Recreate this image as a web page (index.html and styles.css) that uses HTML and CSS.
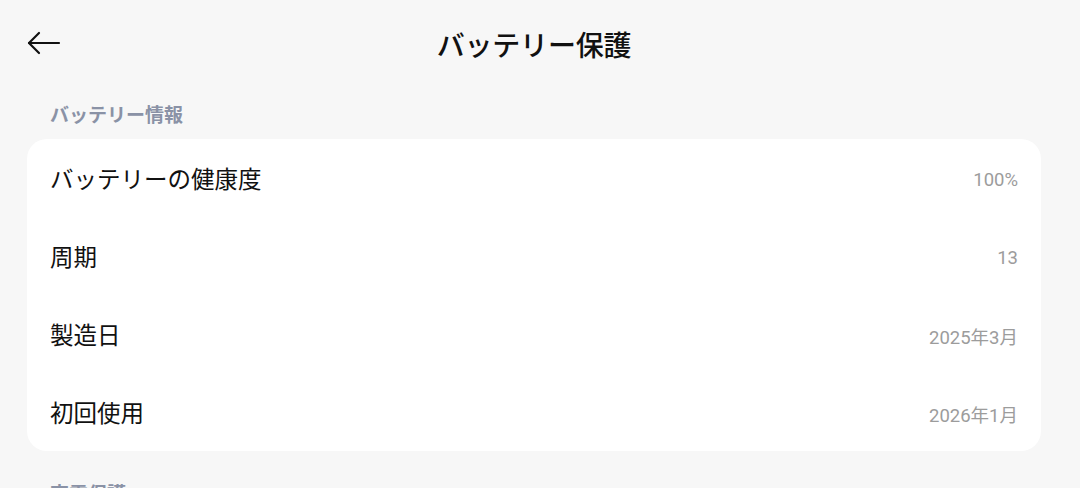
FILE: index.html
```
<!DOCTYPE html>
<html lang="ja">
<head>
<meta charset="utf-8">
<link rel="stylesheet" href="styles.css">
</head>
<body>
<div class="page">
  <header class="appbar">
    <button class="back" aria-label="戻る">
      <svg width="34" height="24" viewBox="0 0 34 24" fill="none" stroke="#111" stroke-width="2.2" stroke-linecap="round" stroke-linejoin="round">
        <path d="M2 12H32"/>
        <path d="M12 2L2 12L12 22"/>
      </svg>
    </button>
    <h1 class="title">バッテリー保護</h1>
    <span class="spacer"></span>
  </header>

  <h2 class="section-title">バッテリー情報</h2>
  <div class="card">
    <div class="row"><span class="label">バッテリーの健康度</span><span class="value">100%</span></div>
    <div class="row"><span class="label">周期</span><span class="value">13</span></div>
    <div class="row"><span class="label">製造日</span><span class="value">2025年3月</span></div>
    <div class="row"><span class="label">初回使用</span><span class="value">2026年1月</span></div>
  </div>

  <h2 class="section-title next">充電保護</h2>
</div>
</body>
</html>
```

FILE: styles.css
```
html, body {
  margin: 0;
  padding: 0;
  background: #f7f7f7;
  overflow: hidden;
  height: 488px;
}
body {
  font-family: "Noto Sans CJK JP", "Noto Sans", sans-serif;
  color: #111;
}
.page {
  width: 1068px;
  display: flex;
  flex-direction: column;
}
.appbar {
  height: 88px;
  display: grid;
  grid-template-columns: 1fr auto 1fr;
  align-items: center;
}
.back {
  justify-self: start;
  margin-left: 27px;
  padding: 0;
  border: 0;
  background: none;
  width: 34px;
  height: 24px;
  display: flex;
  margin-top: -3px;
}
.title {
  margin: 0;
  font-size: 28px;
  font-weight: 500;
  line-height: 1;
  letter-spacing: -0.2px;
}
.section-title {
  margin: 0;
  height: 51px;
  display: flex;
  align-items: center;
  padding-left: 50px;
  font-size: 19px;
  font-weight: 700;
  color: #8a92a6;
}
.section-title.next {
  margin-top: 16px;
}
.card {
  margin: 0 27px;
  background: #fff;
  border-radius: 20px;
  padding: 0 23px;
  display: flex;
  flex-direction: column;
}
.row {
  height: 78px;
  display: flex;
  align-items: center;
  justify-content: space-between;
}
.label {
  font-size: 23.5px;
  font-weight: 400;
  color: #111;
}
.value {
  font-family: Roboto, "Noto Sans CJK JP", sans-serif;
  font-size: 18.5px;
  color: #9c9c9c;
  padding-top: 3px;
}
```
